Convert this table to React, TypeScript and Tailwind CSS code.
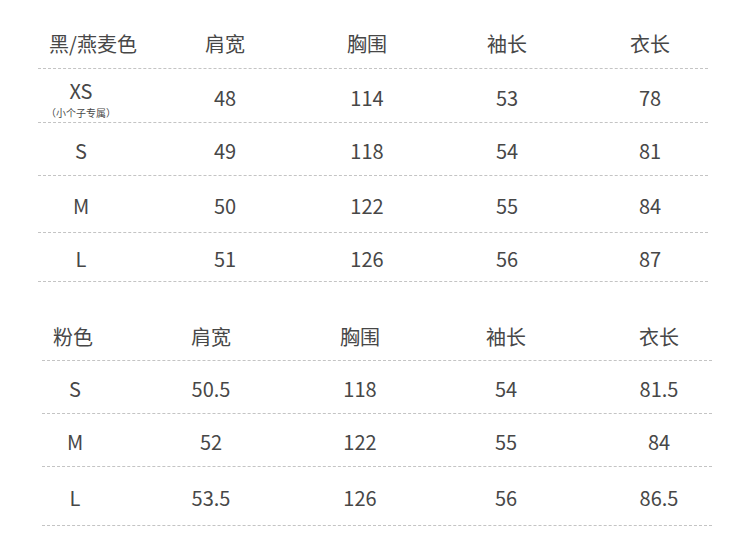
import React from 'react';

const font = { fontFamily: '"Noto Sans CJK SC", "Noto Sans", sans-serif' };

// 黑/燕麦色 尺码表
const table1 = [
  { size: 'XS', note: '（小个子专属）', vals: ['48', '114', '53', '78'], h: 'h-[54px]' },
  { size: 'S', vals: ['49', '118', '54', '81'], h: 'h-[53px]' },
  { size: 'M', vals: ['50', '122', '55', '84'], h: 'h-[57px]' },
  { size: 'L', vals: ['51', '126', '56', '87'], h: 'h-[49px]' },
];

// 粉色 尺码表
const table2 = [
  { size: 'S', vals: ['50.5', '118', '54', '81.5'], h: 'h-[53px]' },
  { size: 'M', vals: ['52', '122', '55', '84'], h: 'h-[53px]' },
  { size: 'L', vals: ['53.5', '126', '56', '86.5'], h: 'h-[59px]' },
];

const heads = ['肩宽', '胸围', '袖长', '衣长'];

export default function App() {
  return (
    <div className="w-[750px] h-[557px] bg-white text-[#474747] overflow-hidden" style={font}>
      {/* 表一 */}
      <div className="ml-[38px] w-[670px]">
        <div className="grid grid-cols-[86px_202px_82px_198px_88px] h-[69px] pt-[19px] items-center text-[20px] border-b border-dashed border-[#c4c4c4]">
          <div className="flex justify-center pl-[24px] whitespace-nowrap">黑/燕麦色</div>
          {heads.map((t) => (
            <div key={t} className="text-center">{t}</div>
          ))}
        </div>
        {table1.map((r) => (
          <div
            key={r.size}
            className={`grid grid-cols-[86px_202px_82px_198px_88px] ${r.h} items-center text-[20px] border-b border-dashed border-[#c4c4c4]`}
          >
            {r.note ? (
              <div className="self-stretch flex flex-col items-center pt-[12px]">
                <span className="text-[20px] leading-[20px]">{r.size}</span>
                <span className="text-[10px] leading-[12px] mt-[6px] whitespace-nowrap">{r.note}</span>
              </div>
            ) : (
              <div className="text-center pt-[4px]">{r.size}</div>
            )}
            {r.vals.map((v, i) => (
              <div key={i} className="text-center pt-[4px]">{v}</div>
            ))}
          </div>
        ))}
      </div>

      {/* 表二 */}
      <div className="ml-[42px] w-[670px]">
        <div className="grid grid-cols-[66px_206px_92px_200px_106px] h-[79px] pt-[31px] items-center text-[20px] border-b border-dashed border-[#c4c4c4]">
          <div className="flex justify-center whitespace-nowrap pr-[4px]">粉色</div>
          {heads.map((t) => (
            <div key={t} className="text-center">{t}</div>
          ))}
        </div>
        {table2.map((r) => (
          <div
            key={r.size}
            className={`grid grid-cols-[66px_206px_92px_200px_106px] ${r.h} items-center text-[20px] border-b border-dashed border-[#c4c4c4]`}
          >
            <div className="text-center pt-[4px]">{r.size}</div>
            {r.vals.map((v, i) => (
              <div key={i} className="text-center pt-[4px]">{v}</div>
            ))}
          </div>
        ))}
      </div>
    </div>
  );
}
